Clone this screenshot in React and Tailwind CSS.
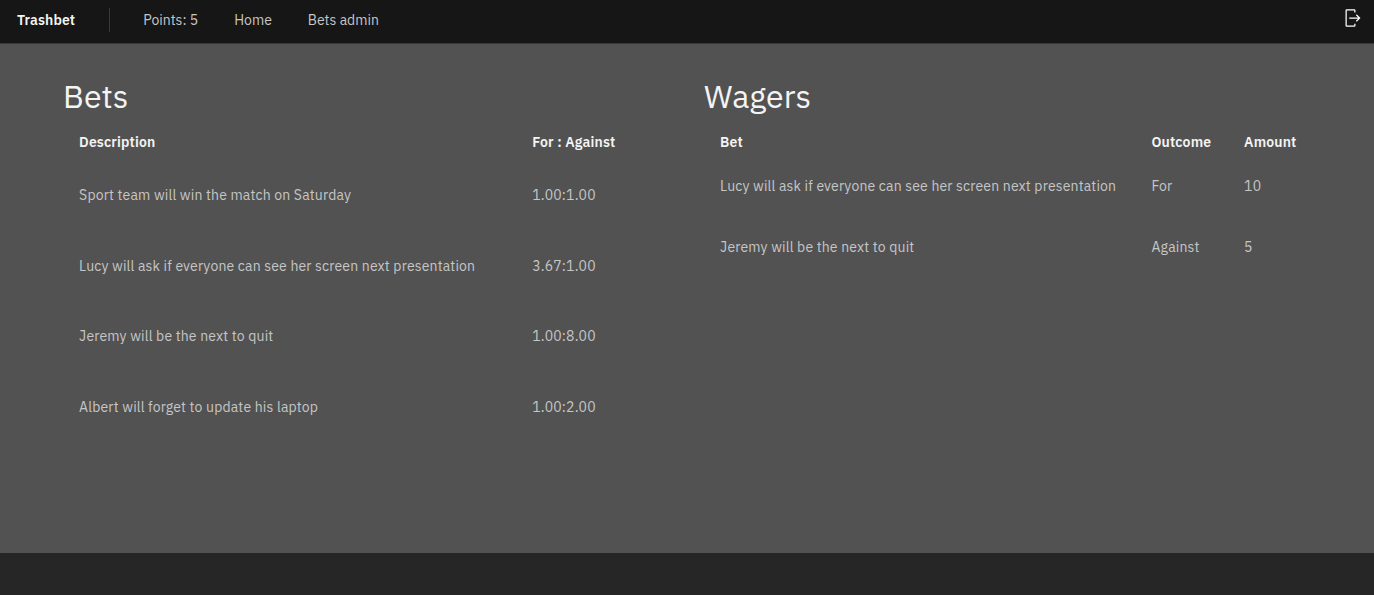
const bets = [
  ["Sport team will win the match on Saturday", "1.00:1.00"],
  ["Lucy will ask if everyone can see her screen next presentation", "3.67:1.00"],
  ["Jeremy will be the next to quit", "1.00:8.00"],
  ["Albert will forget to update his laptop", "1.00:2.00"],
];

const wagers = [
  ["Lucy will ask if everyone can see her screen next presentation", "For", "10"],
  ["Jeremy will be the next to quit", "Against", "5"],
];

function LogoutIcon() {
  return (
    <svg width="20" height="20" viewBox="0 0 32 32" fill="#ffffff" aria-hidden="true">
      <path d="M6 30h12a2.002 2.002 0 0 0 2-2v-3h-2v3H6V4h12v3h2V4a2.002 2.002 0 0 0-2-2H6a2.002 2.002 0 0 0-2 2v24a2.002 2.002 0 0 0 2 2Z" />
      <path d="M20.586 20.586 24.172 17H10v-2h14.172l-3.586-3.586L22 10l6 6-6 6Z" />
    </svg>
  );
}

function Header() {
  return (
    <header className="flex h-11 items-start border-b border-[#393939] bg-[#161616] text-sm leading-5">
      <a className="w-[92px] pl-[17px] pt-[10px] font-semibold tracking-[0.1px] text-[#f4f4f4]">Trashbet</a>
      <span className="mt-2 ml-[17px] h-6 w-px bg-[#393939]" />
      <nav className="flex pt-[10px] pl-[33.2px] tracking-normal text-[#c6c6c6]">
        <a className="w-[91px]">Points: 5</a>
        <a className="w-[73.6px]">Home</a>
        <a>Bets admin</a>
      </nav>
      <button className="mt-2 mr-[11px] ml-auto" aria-label="Log out">
        <LogoutIcon />
      </button>
    </header>
  );
}

export default function App() {
  return (
    <div className="flex h-[595px] flex-col bg-[#262626] font-['IBM_Plex_Sans',Roboto,sans-serif] text-sm leading-5 tracking-[0.16px]">
      <Header />
      <main className="flex h-[509px] bg-[#525252] pl-[63.1px] text-[#c6c6c6]">
        <section className="w-[641px] pt-8">
          <h1 className="text-[32px] leading-10 tracking-normal text-[#f4f4f4]">Bets</h1>
          <div className="flex h-11 pt-4 pl-4 font-semibold text-[#f4f4f4]">
            <span className="w-[453.1px]">Description</span>
            <span>For : Against</span>
          </div>
          {bets.map(([description, odds]) => (
            <div key={description} className="flex h-[70.5px] items-center pl-4">
              <span className="w-[453.1px]">{description}</span>
              <span>{odds}</span>
            </div>
          ))}
        </section>
        <section className="pt-8">
          <h1 className="text-[32px] leading-10 tracking-normal text-[#f4f4f4]">Wagers</h1>
          <div className="flex h-[39px] pt-4 pl-4 font-semibold text-[#f4f4f4]">
            <span className="w-[431.4px]">Bet</span>
            <span className="w-[92.6px]">Outcome</span>
            <span>Amount</span>
          </div>
          {wagers.map(([bet, outcome, amount]) => (
            <div key={bet} className="flex h-[61px] items-center pl-4">
              <span className="w-[431.4px]">{bet}</span>
              <span className="w-[92.6px]">{outcome}</span>
              <span>{amount}</span>
            </div>
          ))}
        </section>
      </main>
    </div>
  );
}
